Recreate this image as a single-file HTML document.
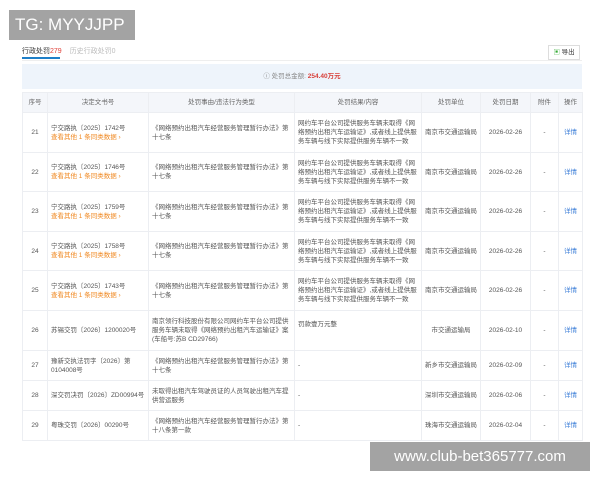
<!DOCTYPE html>
<html><head><meta charset="utf-8"><style>
body{margin:0;width:600px;height:480px;background:#fff;font-family:"Liberation Sans","Noto Sans CJK SC",sans-serif;position:relative;overflow:hidden;color:#555}
.abs{position:absolute}
.tg{left:9px;top:10px;width:126px;height:30px;background:#a3a3a3;color:#fff;font-size:17px;line-height:30px;padding-left:6px;box-sizing:border-box}
.wm{left:370px;top:442px;width:220px;height:29px;background:#a3a3a3;color:#fff;font-size:15px;line-height:29px;text-align:center}
table{position:absolute;left:22px;top:92px;width:560px;border-collapse:collapse;font-size:6.5px;line-height:9px;table-layout:fixed}
td,th{border:1px solid #eceef2;padding:0 3px;vertical-align:middle;font-weight:normal}
th{background:#f4f6fa;height:19px;text-align:center;color:#666}
td.c{text-align:center}
.o{color:#f08a24}.b{color:#3d7fd8}
</style></head><body>
<div class="abs tg">TG: MYYJJPP</div>
<div class="abs" style="left:22px;top:46px;font-size:7px;color:#333">行政处罚<span style="color:#e0413a">279</span><span style="color:#bbb;margin-left:8px">历史行政处罚0</span></div>
<div class="abs" style="left:22px;top:57px;width:38px;height:2px;background:#1e7fc8"></div>
<div class="abs" style="left:22px;top:60px;width:560px;height:1px;background:#eee"></div>
<div class="abs" style="left:548px;top:45px;width:32px;height:15px;border:1px solid #ddd;box-sizing:border-box;font-size:6.5px;line-height:13px;text-align:center;color:#333"><span style="color:#3a3">▣</span> 导出</div>
<div class="abs" style="left:22px;top:64px;width:560px;height:25px;background:#eef4fb;font-size:6.5px;line-height:25px;text-align:center;color:#888">ⓘ 处罚总金额: <b style="color:#d8403a">254.40万元</b></div>
<table>
<colgroup><col style="width:25px"><col style="width:101px"><col style="width:146px"><col style="width:127px"><col style="width:59px"><col style="width:50px"><col style="width:28px"><col style="width:24px"></colgroup>
<tr><th>序号</th><th>决定文书号</th><th>处罚事由/违法行为类型</th><th>处罚结果/内容</th><th>处罚单位</th><th>处罚日期</th><th>附件</th><th>操作</th></tr>
<tr style="height:40px"><td class="c">21</td><td>宁交路执〔2025〕1742号<br><span class="o">查看其他 1 条同类数据 ›</span></td><td>《网络预约出租汽车经营服务管理暂行办法》第十七条</td><td>网约车平台公司提供服务车辆未取得《网络预约出租汽车运输证》,或者线上提供服务车辆与线下实际提供服务车辆不一致</td><td class="c">南京市交通运输局</td><td class="c">2026-02-26</td><td class="c">-</td><td class="c b">详情</td></tr>
<tr style="height:39px"><td class="c">22</td><td>宁交路执〔2025〕1746号<br><span class="o">查看其他 1 条同类数据 ›</span></td><td>《网络预约出租汽车经营服务管理暂行办法》第十七条</td><td>网约车平台公司提供服务车辆未取得《网络预约出租汽车运输证》,或者线上提供服务车辆与线下实际提供服务车辆不一致</td><td class="c">南京市交通运输局</td><td class="c">2026-02-26</td><td class="c">-</td><td class="c b">详情</td></tr>
<tr style="height:40px"><td class="c">23</td><td>宁交路执〔2025〕1759号<br><span class="o">查看其他 1 条同类数据 ›</span></td><td>《网络预约出租汽车经营服务管理暂行办法》第十七条</td><td>网约车平台公司提供服务车辆未取得《网络预约出租汽车运输证》,或者线上提供服务车辆与线下实际提供服务车辆不一致</td><td class="c">南京市交通运输局</td><td class="c">2026-02-26</td><td class="c">-</td><td class="c b">详情</td></tr>
<tr style="height:39px"><td class="c">24</td><td>宁交路执〔2025〕1758号<br><span class="o">查看其他 1 条同类数据 ›</span></td><td>《网络预约出租汽车经营服务管理暂行办法》第十七条</td><td>网约车平台公司提供服务车辆未取得《网络预约出租汽车运输证》,或者线上提供服务车辆与线下实际提供服务车辆不一致</td><td class="c">南京市交通运输局</td><td class="c">2026-02-26</td><td class="c">-</td><td class="c b">详情</td></tr>
<tr style="height:40px"><td class="c">25</td><td>宁交路执〔2025〕1743号<br><span class="o">查看其他 1 条同类数据 ›</span></td><td>《网络预约出租汽车经营服务管理暂行办法》第十七条</td><td>网约车平台公司提供服务车辆未取得《网络预约出租汽车运输证》,或者线上提供服务车辆与线下实际提供服务车辆不一致</td><td class="c">南京市交通运输局</td><td class="c">2026-02-26</td><td class="c">-</td><td class="c b">详情</td></tr>
<tr style="height:40px"><td class="c">26</td><td>苏锡交罚〔2026〕1200020号</td><td>南京领行科技股份有限公司网约车平台公司提供服务车辆未取得《网络预约出租汽车运输证》案(车船号:苏B CD29766)</td><td style="vertical-align:top;padding-top:9px">罚款壹万元整</td><td class="c">市交通运输局</td><td class="c">2026-02-10</td><td class="c">-</td><td class="c b">详情</td></tr>
<tr style="height:30px"><td class="c">27</td><td>豫新交执法罚字〔2026〕第0104008号</td><td>《网络预约出租汽车经营服务管理暂行办法》第十七条</td><td>-</td><td class="c">新乡市交通运输局</td><td class="c">2026-02-09</td><td class="c">-</td><td class="c b">详情</td></tr>
<tr style="height:30px"><td class="c">28</td><td>深交罚决罚〔2026〕ZD00994号</td><td>未取得出租汽车驾驶员证的人员驾驶出租汽车提供营运服务</td><td>-</td><td class="c">深圳市交通运输局</td><td class="c">2026-02-06</td><td class="c">-</td><td class="c b">详情</td></tr>
<tr style="height:30px"><td class="c">29</td><td>粤珠交罚〔2026〕00290号</td><td>《网络预约出租汽车经营服务管理暂行办法》第十八条第一款</td><td>-</td><td class="c">珠海市交通运输局</td><td class="c">2026-02-04</td><td class="c">-</td><td class="c b">详情</td></tr>
</table>
<div class="abs wm">www.club-bet365777.com</div>
</body></html>
